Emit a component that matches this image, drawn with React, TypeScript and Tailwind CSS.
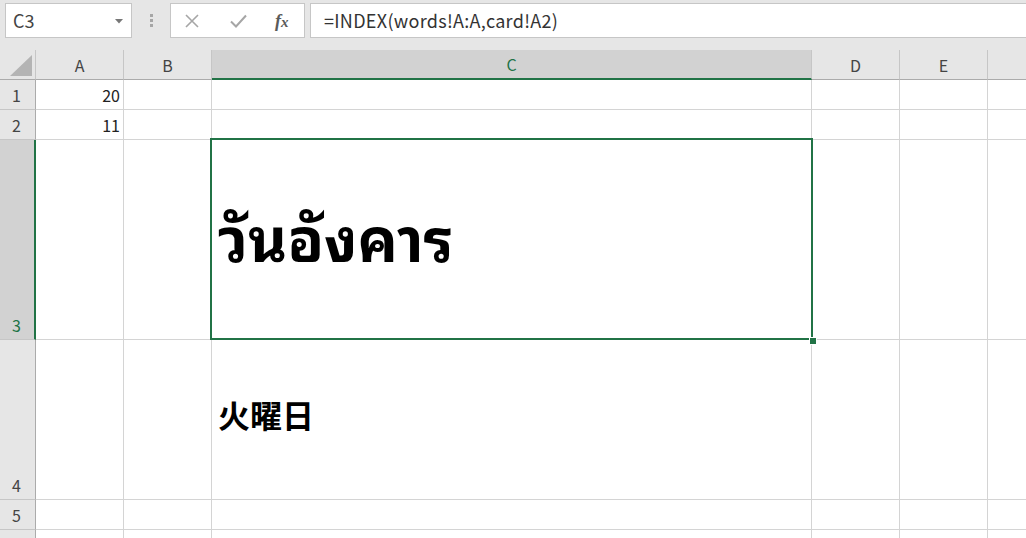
import React from "react";

const UI = { fontFamily: '"Noto Sans CJK JP", "Liberation Sans", sans-serif' };

function HeaderCell({ w, label, selected, last }: { w: string; label: string; selected?: boolean; last?: boolean }) {
  return (
    <div
      className={`${w} h-full shrink-0 flex items-center justify-center text-[16px] ${
        selected ? "bg-[#d2d2d2] text-[#217346] border-b-2 border-b-[#217346]" : "bg-[#e6e6e6] text-[#444] border-b border-b-[#ababab]"
      } ${last ? "" : "border-r border-r-[#c6c6c6]"}`}
    >
      {label}
    </div>
  );
}

function RowHead({ n, h, selected }: { n: string; h: string; selected?: boolean }) {
  return (
    <div
      className={`w-[36px] ${h} shrink-0 flex items-end pl-[12px] pb-[2px] text-[16px] leading-[24px] border-b ${
        selected
          ? "bg-[#d2d2d2] text-[#217346] border-r-2 border-r-[#217346] border-b-[#c6c6c6]"
          : "bg-[#e6e6e6] text-[#444] border-r border-r-[#ababab] border-b-[#c6c6c6]"
      }`}
    >
      {n}
    </div>
  );
}

function Cell({ w, h, children, right }: { w: string; h: string; children?: React.ReactNode; right?: boolean }) {
  return (
    <div
      className={`${w} ${h} shrink-0 border-r border-b border-[#d4d4d4] bg-white flex ${
        right ? "items-end justify-end pr-[3px] pb-[2px]" : "items-center"
      }`}
    >
      {children}
    </div>
  );
}

const COLS = ["w-[88px]", "w-[88px]", "w-[600px]", "w-[88px]", "w-[88px]", "w-[88px]"];

function Row({ n, h, selected, cells }: { n: string; h: string; selected?: boolean; cells?: Record<number, React.ReactNode> }) {
  return (
    <div className="flex">
      <RowHead n={n} h={h} selected={selected} />
      {COLS.map((w, i) => (
        <Cell key={i} w={w} h={h} right={i === 0}>
          {cells?.[i]}
        </Cell>
      ))}
    </div>
  );
}

export default function App() {
  return (
    <div className="w-[1026px] h-[538px] overflow-hidden bg-[#e6e6e6] relative" style={UI}>
      {/* Formula bar */}
      <div className="h-[50px] flex items-start pt-[3px]">
        <div className="ml-[5px] w-[127px] h-[35px] bg-white border border-[#c6c6c6] flex items-center pl-[7px] pr-[8px] text-[18px] text-[#444]">
          <span className="flex-1">C3</span>
          <svg width="8" height="5" viewBox="0 0 8 5" className="mt-[1px]">
            <path d="M0 0 H8 L4 4.5 Z" fill="#777" />
          </svg>
        </div>
        <div className="w-[38px] h-[35px] flex flex-col items-center justify-center gap-[2px]">
          <div className="w-[3px] h-[3px] bg-[#a6a6a6]" />
          <div className="w-[3px] h-[3px] bg-[#a6a6a6]" />
          <div className="w-[3px] h-[3px] bg-[#a6a6a6]" />
        </div>
        <div className="w-[135px] h-[35px] bg-white border border-[#c6c6c6] flex items-center">
          <svg width="14" height="14" viewBox="0 0 14 14" className="ml-[14px]">
            <path d="M1 1 L13 13 M13 1 L1 13" stroke="#a6a6a6" strokeWidth="1.6" fill="none" />
          </svg>
          <svg width="17" height="14" viewBox="0 0 17 14" className="ml-[31px]">
            <path d="M1 7.5 L6 12.5 L16 1.5" stroke="#a6a6a6" strokeWidth="2" fill="none" />
          </svg>
          <span
            className="ml-[28px] text-[18px] italic font-bold text-[#5a5a5a] leading-none"
            style={{ fontFamily: '"Liberation Serif", serif' }}
          >
            f<span className="text-[15px]">x</span>
          </span>
        </div>
        <div className="ml-[5px] flex-1 h-[35px] bg-white border border-[#c6c6c6] border-r-0 flex items-center pl-[13px] text-[18px] tracking-[0.3px] text-[#333]">
          =INDEX(words!A:A,card!A2)
        </div>
      </div>

      {/* Column headers */}
      <div className="flex h-[30px]">
        <div className="w-[36px] h-full shrink-0 bg-[#e6e6e6] border-r border-b border-r-[#c6c6c6] border-b-[#ababab] flex items-end justify-end pr-[3px] pb-[3px]">
          <svg width="22" height="21" viewBox="0 0 22 21">
            <path d="M22 0 V21 H0 Z" fill="#b4b4b4" />
          </svg>
        </div>
        <HeaderCell w="w-[88px]" label="A" />
        <HeaderCell w="w-[88px]" label="B" />
        <HeaderCell w="w-[600px]" label="C" selected />
        <HeaderCell w="w-[88px]" label="D" />
        <HeaderCell w="w-[88px]" label="E" />
        <HeaderCell w="w-[88px]" label="" last />
      </div>

      {/* Rows */}
      <div className="relative bg-white">
        <Row n="1" h="h-[30px]" cells={{ 0: <span className="text-[16px] leading-[24px] text-[#222]">20</span> }} />
        <Row n="2" h="h-[30px]" cells={{ 0: <span className="text-[16px] leading-[24px] text-[#222]">11</span> }} />
        <Row
          n="3"
          h="h-[200px]"
          selected
          cells={{
            2: (
              <span
                className="pl-[6px] pb-[10px] text-[60px] font-bold text-black leading-none"
                style={{
                  fontFamily:
                    '"Noto Sans Thai Looped", Loma, Garuda, Tahoma, "Leelawadee UI", "Noto Sans Thai", "Noto Sans", sans-serif',
                }}
              >
                วันอังคาร
              </span>
            ),
          }}
        />
        <Row
          n="4"
          h="h-[160px]"
          cells={{
            2: (
              <span
                className="pl-[6px] pb-[12px] text-[32px] font-bold text-black leading-none"
                style={{ fontFamily: '"Noto Sans CJK JP", sans-serif' }}
              >
                火曜日
              </span>
            ),
          }}
        />
        <Row n="5" h="h-[30px]" />
        <Row n="" h="h-[30px]" />

        {/* Selection box over C3 */}
        <div className="absolute left-[210px] top-[58px] w-[603px] h-[202px] border-2 border-[#217346] pointer-events-none" />
        <div className="absolute left-[809px] top-[257px] w-[6px] h-[6px] bg-[#217346] border border-white box-content pointer-events-none" />
      </div>
    </div>
  );
}
